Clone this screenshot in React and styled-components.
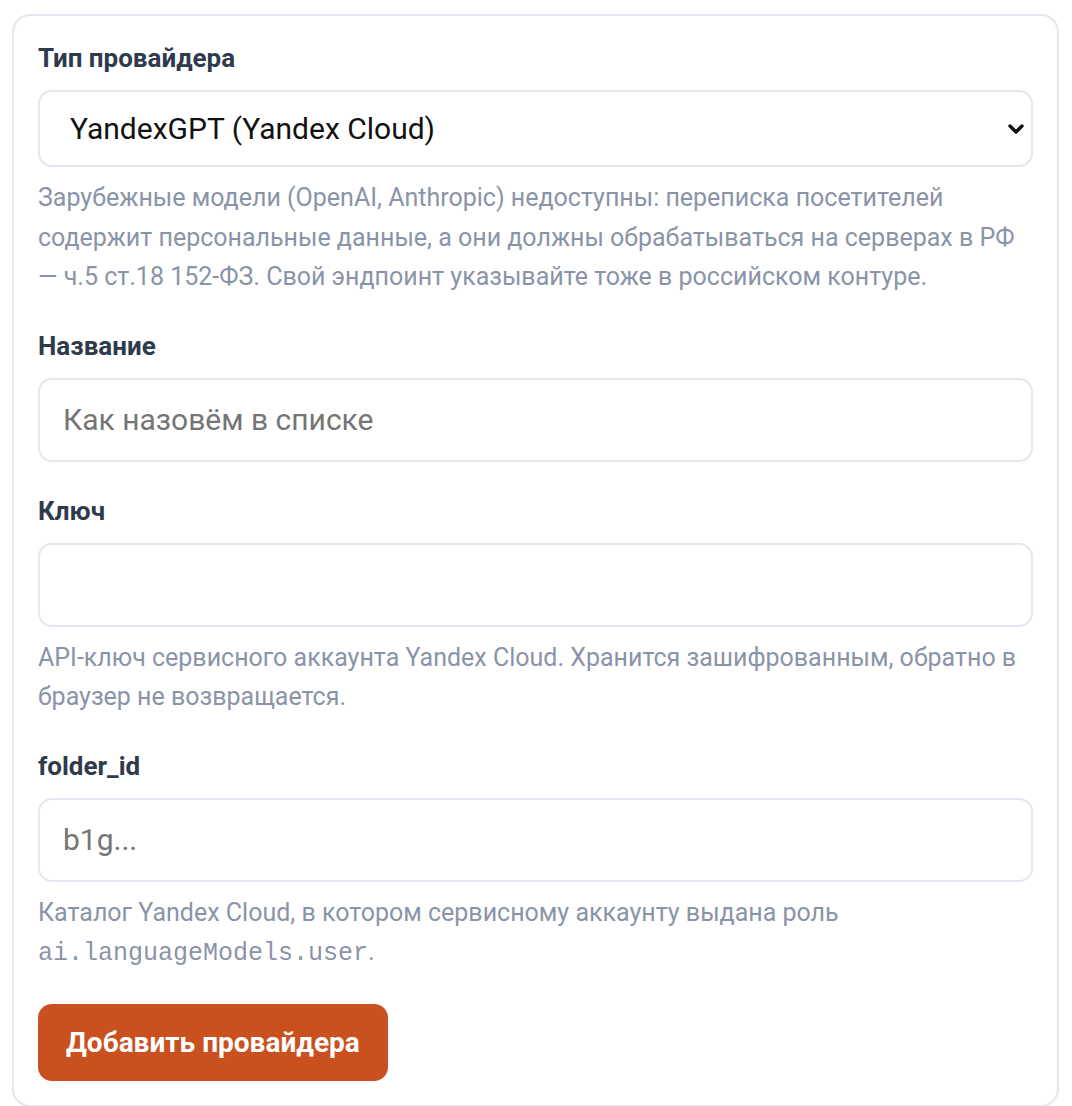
import React from "react";
import styled, { createGlobalStyle } from "styled-components";

const GlobalStyle = createGlobalStyle`
  html, body {
    margin: 0;
    background: #ffffff;
  }
  body {
    padding: 14px 13px 0 12px;
    font-family: Roboto, "Liberation Sans", sans-serif;
  }
  * {
    box-sizing: border-box;
  }
`;

const Card = styled.form`
  border: 2px solid #e3e7f0;
  border-radius: 18px;
  padding: 24px;
  display: flex;
  flex-direction: column;
  gap: 31px;
  background: #fff;
`;

const Field = styled.div`
  display: flex;
  flex-direction: column;
`;

const Label = styled.label`
  font-size: 26px;
  line-height: 36px;
  font-weight: 700;
  color: #2f3a4d;
  margin-bottom: 14px;
`;

const SelectWrap = styled.div`
  position: relative;
`;

const Select = styled.select`
  appearance: none;
  -webkit-appearance: none;
  width: 100%;
  height: 77px;
  border: 2px solid #e3e7f0;
  border-radius: 14px;
  background: #fff;
  padding: 0 60px 0 30px;
  font-family: Roboto, "Liberation Sans", sans-serif;
  font-size: 30px;
  color: #111;
  outline: none;
`;

const Chevron = styled.svg`
  position: absolute;
  right: 9px;
  top: 50%;
  width: 16px;
  height: 16px;
  margin-top: -8px;
  pointer-events: none;
`;

const Input = styled.input`
  width: 100%;
  height: 84px;
  border: 2px solid #e3e7f0;
  border-radius: 14px;
  background: #fff;
  padding: 0 23px;
  font-family: Roboto, "Liberation Sans", sans-serif;
  font-size: 30px;
  color: #111;
  outline: none;
  &::placeholder {
    color: #757575;
  }
`;

const Help = styled.p`
  margin: 11px 0 0;
  font-size: 25px;
  line-height: 39.5px;
  color: #8a94a8;
`;

const Code = styled.code`
  font-family: "Liberation Mono", monospace;
  font-size: 25px;
`;

const Actions = styled.div`
  display: flex;
  margin-top: -1px;
`;

const Button = styled.button`
  height: 77px;
  padding: 0 28px;
  border: none;
  border-radius: 14px;
  background: #c8511f;
  color: #fff;
  font-family: Roboto, "Liberation Sans", sans-serif;
  font-size: 28px;
  font-weight: 700;
  cursor: pointer;
`;

export default function App() {
  return (
    <>
      <GlobalStyle />
      <Card onSubmit={(e) => e.preventDefault()}>
        <Field>
          <Label>Тип провайдера</Label>
          <SelectWrap>
            <Select defaultValue="yandex">
              <option value="yandex">YandexGPT (Yandex Cloud)</option>
              <option value="gigachat">GigaChat</option>
              <option value="custom">Свой эндпоинт</option>
            </Select>
            <Chevron viewBox="0 0 16 16">
              <polyline
                points="2 5 8 11 14 5"
                fill="none"
                stroke="#111"
                strokeWidth="3.4"
                strokeLinecap="round"
                strokeLinejoin="round"
              />
            </Chevron>
          </SelectWrap>
          <Help>
            Зарубежные модели (OpenAI, Anthropic) недоступны: переписка посетителей
            содержит персональные данные, а они должны обрабатываться на серверах в РФ
            — ч.5 ст.18 152-ФЗ. Свой эндпоинт указывайте тоже в российском контуре.
          </Help>
        </Field>

        <Field>
          <Label>Название</Label>
          <Input placeholder="Как назовём в списке" />
        </Field>

        <Field>
          <Label>Ключ</Label>
          <Input type="password" />
          <Help>
            API-ключ сервисного аккаунта Yandex Cloud. Хранится зашифрованным, обратно в
            браузер не возвращается.
          </Help>
        </Field>

        <Field>
          <Label>folder_id</Label>
          <Input placeholder="b1g..." />
          <Help>
            Каталог Yandex Cloud, в котором сервисному аккаунту выдана роль{" "}
            <Code>ai.languageModels.user</Code>.
          </Help>
        </Field>

        <Actions>
          <Button type="submit">Добавить провайдера</Button>
        </Actions>
      </Card>
    </>
  );
}
